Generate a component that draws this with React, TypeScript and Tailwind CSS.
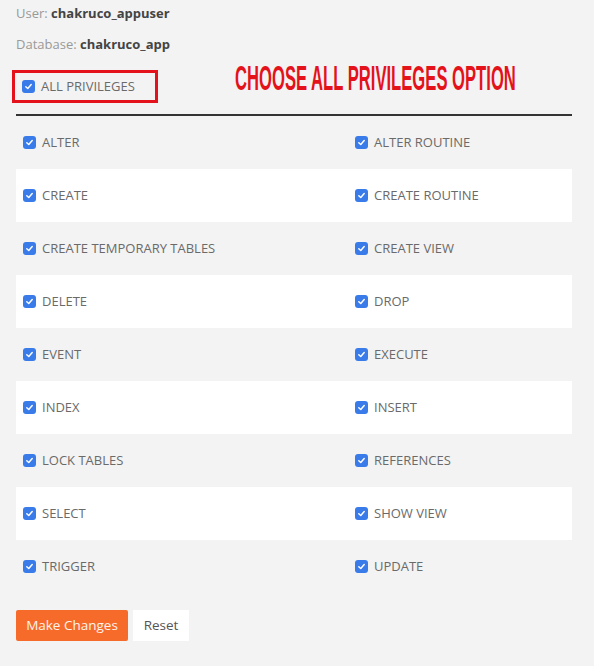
const rows: [string, string][] = [
  ["ALTER", "ALTER ROUTINE"],
  ["CREATE", "CREATE ROUTINE"],
  ["CREATE TEMPORARY TABLES", "CREATE VIEW"],
  ["DELETE", "DROP"],
  ["EVENT", "EXECUTE"],
  ["INDEX", "INSERT"],
  ["LOCK TABLES", "REFERENCES"],
  ["SELECT", "SHOW VIEW"],
  ["TRIGGER", "UPDATE"],
];

const Check = () => (
  <span className="inline-flex h-[13px] w-[13px] shrink-0 items-center justify-center rounded-[3px] bg-[#3a7bea]">
    <svg width="9" height="9" viewBox="0 0 10 10" fill="none">
      <path d="M2 5.2 4.2 7.3 8 2.8" stroke="white" strokeWidth="1.6" strokeLinecap="round" strokeLinejoin="round" />
    </svg>
  </span>
);

const Item = ({ label }: { label: string }) => (
  <label className="flex items-center gap-[6px] whitespace-nowrap pl-[7px] text-[13px] text-[#6a6a6a]">
    <Check />
    {label}
  </label>
);

const App = () => {
  return (
    <div
      className="h-[666px] w-[594px] bg-[#f3f3f3] pl-4 pr-[22px] pt-[3px]"
      style={{ fontFamily: '"Open Sans", "Noto Sans", sans-serif' }}
    >
      <p className="text-[13px] leading-[20px] text-[#999]">
        User: <span className="font-bold text-[#444]">chakruco_appuser</span>
      </p>
      <p className="mt-[11px] text-[13px] leading-[20px] text-[#999]">
        Database: <span className="font-bold text-[#444]">chakruco_app</span>
      </p>

      <div className="mt-[16px] flex items-start">
        <div className="-ml-1 flex h-[33px] w-[146px] shrink-0 items-center border-[3px] border-[#e3121b]">
          <Item label="ALL PRIVILEGES" />
        </div>
        <div
          className="ml-[77px] -mt-[10px] origin-left scale-x-[0.475] whitespace-nowrap text-[35px] font-bold leading-[36px] text-[#e3121b]"
          style={{ fontFamily: '"Liberation Sans", Arial, sans-serif' }}
        >
          CHOOSE ALL PRIVILEGES OPTION
        </div>
      </div>

      <div className="mt-[11px] h-[2px] bg-[#333]" />

      <div>
        {rows.map(([a, b], i) => (
          <div
            key={a}
            className={`grid h-[53px] grid-cols-[332px_1fr] items-center ${i % 2 === 1 ? "bg-white" : ""}`}
          >
            <Item label={a} />
            <Item label={b} />
          </div>
        ))}
      </div>

      <div className="mt-[17px] flex gap-[5px]">
        <button className="h-[31px] w-[112px] rounded-[2px] bg-[#f76b2a] text-[13.5px] text-[#fff3ec]">
          Make Changes
        </button>
        <button className="h-[31px] w-[56px] bg-white text-[13.5px] text-[#555]">Reset</button>
      </div>
    </div>
  );
};

export default App;
